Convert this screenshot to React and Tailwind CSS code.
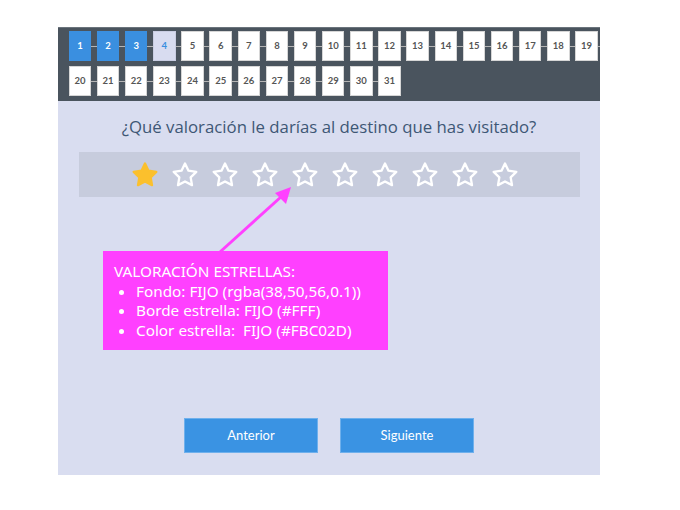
import React from 'react';

const firstRow = Array.from({ length: 19 }, (_, i) => i + 1);
const secondRow = Array.from({ length: 12 }, (_, i) => i + 20);

const StarIcon = ({ filled }) => (
  <svg width="28" height="28" viewBox="0 0 24 24">
    <path
      d="M12 2.2l3 6.1 6.7 1-4.85 4.7 1.15 6.7L12 17.55 6 20.7l1.15-6.7L2.3 9.3l6.7-1z"
      fill={filled ? '#FBC02D' : 'none'}
      stroke={filled ? '#FBC02D' : '#fff'}
      strokeWidth="2"
      strokeLinejoin="round"
    />
  </svg>
);

const DayBox = ({ day, current }) => {
  const done = day < current;
  const active = day === current;
  return (
    <div
      className={
        'flex h-[30px] w-[22.5px] shrink-0 items-center justify-center border text-[9.5px] font-bold ' +
        (done
          ? 'border-[#3a8fe0] bg-[#3a8fe0] text-white'
          : active
          ? 'border-[#c9cde2] bg-[#d8dcf0] text-[#3a8fe0]'
          : 'border-[#d6d6d6] bg-white text-[#555]')
      }
    >
      {day}
    </div>
  );
};

const DayRow = ({ days, current, tail }) => (
  <div className="flex items-center">
    {days.map((d, i) => {
      const last = i === days.length - 1;
      return (
        <div key={d} className={'flex items-center ' + (last && tail ? 'flex-1' : '')}>
          <DayBox day={d} current={current} />
          {!last && <div className="h-px w-[5.65px] bg-[#b5b5b5]" />}
          {last && tail && <div className="h-px flex-1 bg-[#b5b5b5]" />}
        </div>
      );
    })}
  </div>
);

export default function App() {
  const rating = 1;

  return (
    <div className="relative h-[510px] w-[680px] bg-white" style={{ fontFamily: 'Lato, sans-serif' }}>
      <div className="relative ml-[58px] pt-[27px]">
        <div className="w-[542px]">
          {/* day selector */}
          <div className="flex h-[74px] flex-col gap-[5px] border-t border-[#6b747c] bg-[#4a545e] pl-[10.7px] pt-[3px]">
            <DayRow days={firstRow} current={4} tail />
            <DayRow days={secondRow} current={4} />
          </div>

          <div className="flex h-[374px] flex-col bg-[#d9ddf0] pt-[16px]">
            <p
              className="text-center text-[16.8px] leading-[20px] text-[#3e5775]"
              style={{ fontFamily: '"Open Sans", sans-serif' }}
            >
              ¿Qué valoración le darías al destino que has visitado?
            </p>

            <div className="ml-[21px] mt-[15px] flex h-[45px] w-[501px] items-center gap-[12px] bg-[#c7ccdd] pl-[52px]">
              {Array.from({ length: 10 }, (_, i) => (
                <StarIcon key={i} filled={i < rating} />
              ))}
            </div>

            <div className="mt-[221px] flex justify-center gap-[22px]">
              <button className="h-[35px] w-[134px] border border-[#6fb0ec] bg-[#3a93e3] text-[13px] text-white">
                Anterior
              </button>
              <button className="h-[35px] w-[134px] border border-[#6fb0ec] bg-[#3a93e3] text-[13px] text-white">
                Siguiente
              </button>
            </div>
          </div>
        </div>
      </div>

      {/* annotation arrow */}
      <svg className="absolute left-0 top-0" width="680" height="510">
        <line x1="220" y1="252" x2="282" y2="196" stroke="#ff40ff" strokeWidth="3" />
        <polygon points="291,187 275,193 286,204" fill="#ff40ff" />
      </svg>

      <div
        className="absolute left-[103px] top-[251px] h-[99px] w-[285px] bg-[#ff40ff] pl-[11px] pt-[11px] text-[15.3px] leading-[19.5px] text-white"
        style={{ fontFamily: '"Noto Sans", sans-serif' }}
      >
        <div>VALORACIÓN ESTRELLAS:</div>
        <ul className="list-disc pl-[22px]">
          <li>Fondo: FIJO (rgba(38,50,56,0.1))</li>
          <li>Borde estrella: FIJO (#FFF)</li>
          <li>Color estrella:&nbsp; FIJO (#FBC02D)</li>
        </ul>
      </div>
    </div>
  );
}
